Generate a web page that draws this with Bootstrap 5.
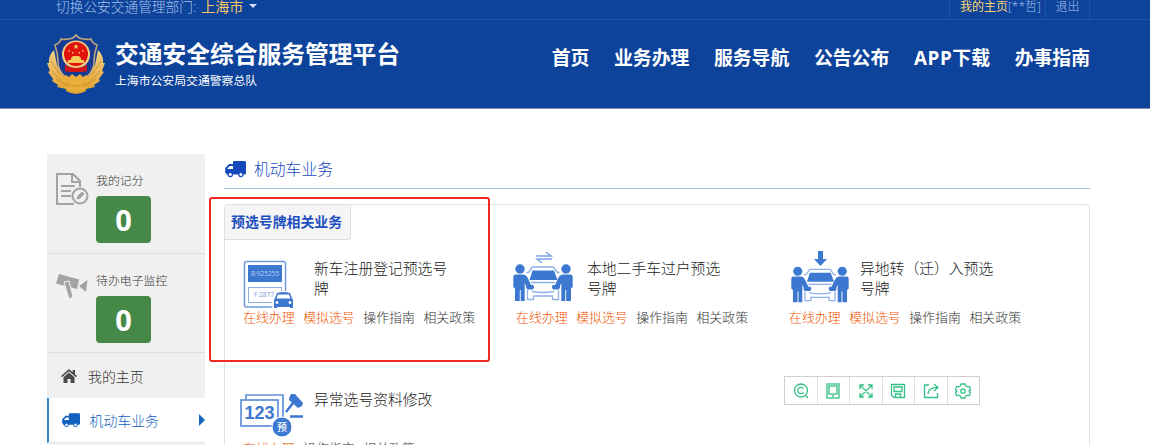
<!DOCTYPE html>
<html lang="zh-CN">
<head>
<meta charset="utf-8">
<meta name="viewport" content="width=device-width, initial-scale=1">
<title>交通安全综合服务管理平台</title>
<link href="https://cdn.jsdelivr.net/npm/bootstrap@5.3.0/dist/css/bootstrap.min.css" rel="stylesheet">
<style>
  body { font-family: "Open Sans", "Noto Sans CJK SC", sans-serif; font-weight: 300; height: 445px; overflow: hidden; position: relative; background: #fff; color: #333; }
  .page-wrap { width: 1043px; margin-left: 47px; }
  .site-head { background: #0d439b; height: 108.5px; border-bottom: 1px solid #8091b0; }
  .top-strip { height: 20px; border-bottom: 1px solid #1c52a8; }
  .top-strip .page-wrap { height: 19px; color: #a9c1ea; }
  .dept { font-size: 13.7px; line-height: 20px; margin-top: -6px; padding-left: 9px; white-space: nowrap; }
  .dept b { font-size: 14px; color: #ffc861; margin-left: 5px; }
  .tri-down { border: 4px solid transparent; border-top-color: #d5e2f7; border-bottom: 0; margin: -2px 0 0 6px; }
  .user-links { font-size: 12px; line-height: 14px; }
  .user-links span { border-left: 1px solid #1c52a8; height: 19px; white-space: nowrap; flex-shrink: 0; }
  .user-links b { color: #ffd36b; }
  .brand-title { font-size: 23.75px; line-height: 28px; font-weight: 700; }
  .brand-sub { font-size: 11.85px; line-height: 16px; font-weight: 400; }
  .main-nav { gap: 24.6px; font-size: 18.85px; line-height: 26px; font-weight: 700; margin-top: 25px; }
  .side { width: 158px; background: #f0f0f0; height: 300px; }
  .stat { height: 99.5px; border-bottom: 1px solid #dedede; padding: 18px 0 0 9px; }
  .stat svg { margin-top: 1px; }
  .stat-label { font-size: 11.9px; line-height: 18px; color: #333; margin-top: -1px; }
  .count { width: 55px; height: 47px; border-radius: 4px; background: #468847; color: #fff; font-size: 29px; line-height: 48px; font-weight: 700; margin-top: 7px; }
  .side-item { height: 45px; font-size: 13.9px; padding-left: 14px; }
  .side-item.current { background: #fff; color: #1060c0; border-left: 2px solid #3c86c4; padding-left: 13px; border-bottom: 1px solid #e3e3e3; }
  .tri-right { border: 6px solid transparent; border-left: 6px solid #1768c0; border-right: 0; }
  .content { width: 866px; margin-left: 19px; }
  .section-title { height: 35px; border-bottom: 1px solid #a9c5e6; color: #1448bc; font-size: 15.8px; line-height: 30px; }
  .panel { margin-top: 15px; height: 300px; border: 1px solid #e0e0e0; border-radius: 4px; }
  .panel-tab { width: 126px; height: 35px; background: #f5f5f5; border: 1px solid #ddd; border-width: 0 1px 1px 0; border-radius: 3px 0 4px 0; color: #1b4fc0; font-size: 13.9px; font-weight: 700; line-height: 34px; padding-left: 6px; white-space: nowrap; }
  .services { padding: 9px 0 0 12px; display: grid; grid-template-columns: repeat(3, 273px); grid-auto-rows: 131px; }
  .svc-title { width: 146px; font-size: 14.8px; line-height: 20px; height: 46px; margin: 9px 0 0 11px; color: #222; }
  .svc-links { font-size: 12.9px; line-height: 20px; gap: 8.6px; padding-left: 6px; margin-top: -2px; color: #333; white-space: nowrap; }
  .svc-links .hot { color: #f05400; }
  .mark-frame { position: absolute; left: 209px; top: 197px; width: 281px; height: 165px; border: 2px solid #ee2a22; border-radius: 3px; }
  .shot-tools { position: absolute; left: 784px; top: 376px; width: 196px; height: 29px; border: 1px solid #cfcfcf; background: #fff; color: #35c187; }
  .shot-tools span + span { border-left: 1px solid #dedede; }
</style>
</head>
<body>
<svg class="d-none">
  <symbol id="truck" viewBox="0 0 21 17"><path fill="currentColor" fill-rule="evenodd" d="M9 0h10.500q1.500 0 1.500 1.500V12q0 1.500-1.500 1.500H18.500a2.700 2.700 0 0 1-5.400 0H8a2.700 2.700 0 0 1-5.400 0H1.200V12H.2V7L4.100 3H8V1Q8 0 9 0ZM4.700 5 2.500 7.300V8H8V5ZM5.300 12a1.500 1.500 0 1 0 .01 0ZM15.800 12a1.500 1.500 0 1 0 .01 0Z"/></symbol>
  <symbol id="person" viewBox="0 0 22 38"><circle cx="7" cy="5" r="4.700"/><path d="M2 10.500h8.500q3 .5 4.500 4l3 6.500h2q1.500 1 1 2.500l-1 2h-5.500q-2-1-1.500-3.500L11.700 19v18H7.700V26h-.9v11H2V24.500L.3 23V13Q.3 11 2 10.500Z"/></symbol>
  <symbol id="people-car" viewBox="0 0 60 38">
    <path d="M19.500 6.500h21.500l3.500 9.500H16.500Z" fill="#3d78d0"/>
    <path d="M13.500 8.500h2l4-5.500h21l4 5.500h2M14.500 26v9.500h6V32h19v3.500h6V26M19 27.500q11 2 22 0M18 18.500h24" fill="none" stroke="#8db0e6" stroke-width="1.300"/>
    <use href="#person" width="22" height="38" fill="#3d78d0"/>
    <use href="#person" width="22" height="38" fill="#3d78d0" transform="matrix(-1 0 0 1 60 0)"/>
  </symbol>
</svg>

<header class="site-head text-white">
  <div class="top-strip">
    <div class="page-wrap d-flex justify-content-between">
      <div class="dept d-flex align-items-center"><span>切换公安交通管理部门:</span><b>上海市</b><i class="tri-down"></i></div>
      <div class="user-links d-flex"><span style="width:96px;padding-left:10px"><b>我的主页</b>[**哲]</span><span class="text-center" style="width:44px">退出</span><span></span></div>
    </div>
  </div>
  <div class="page-wrap d-flex justify-content-between">
    <div class="d-flex">
      <svg width="58" height="61" viewBox="0 0 58 61" style="margin-top:14px">
        <defs><linearGradient id="gold" x2="0" y2="1"><stop stop-color="#f3cf85"/><stop offset="1" stop-color="#dfa02c"/></linearGradient></defs>
        <path d="M7 16Q1 22 2 29l-2 0 3 8-2 1 5 7-1 2 6 4-1 2 9 2v2q10 6 20 0v-2l9-2-1-2 6-4-1-2 5-7-2-1 3-8h-2q1-7-5-13l-3 15-12 15H19L10 31Z" fill="url(#gold)"/>
        <path d="M29 1q3 4 8 4 5 1 7 0 1 4 6 6-3 9-3 17 0 13-18 22Q11 41 11 28q0-8-3-17 5-2 6-6 2 1 7 0 5 0 8-4Z" fill="#173b93" stroke="#c5a77c" stroke-width="1.500"/>
        <circle cx="29" cy="20.500" r="14" fill="#f0cf86"/><circle cx="29" cy="20" r="12" fill="#e0120e"/>
        <path d="M18 31q11 6 22 0v6l-5 1H23l-5-1Z" fill="#cf1715"/>
        <path d="m29 10 .8 1.800h1.900l-1.500 1.300.5 1.900-1.700-1.100-1.700 1.100.5-1.900-1.500-1.300h1.900ZM21.500 16h1.500v1.500h-1.500ZM35 16h1.500v1.500h-1.500ZM25 18h1.500v1.500H25ZM31.500 18H33v1.500h-1.500ZM24 24l2-2h6l2 2v2h3v3H21v-3h3Z" fill="#f5c85a"/>
        <path d="M13 45l6-4 3 2 3-3 4 3 4-3 3 3 3-2 6 4-5 9q-11 8-22 0Z" fill="#e9ae3a"/>
        <path d="M4 27l9 14M5 37l11 11M9 45l13 8M54 27l-9 14M53 37 42 48M49 45l-13 8M18 49q11 6 22 0" fill="none" stroke="#c78a2b" stroke-width=".8"/>
      </svg>
      <div style="padding:20px 0 0 10px">
        <div class="brand-title">交通安全综合服务管理平台</div>
        <div class="brand-sub mt-1">上海市公安局交通警察总队</div>
      </div>
    </div>
    <nav class="main-nav d-flex text-nowrap"><span>首页</span><span>业务办理</span><span>服务导航</span><span>公告公布</span><span><span style="letter-spacing:.6px">APP</span>下载</span><span>办事指南</span></nav>
  </div>
</header>

<main class="page-wrap d-flex overflow-hidden" style="padding-top:45.500px;height:336.500px">
  <aside class="side flex-shrink-0">
    <div class="stat d-flex">
      <svg width="33" height="33" viewBox="0 0 33 33" fill="none" stroke="#a3a3a3" stroke-width="2"><path d="M24 14V8l-7-7H1v30h17M16 1v8h8M5 13h14M5 18h10M5 23h10"/><circle cx="24" cy="23" r="7.500"/><path d="m21 26 1-3 4-4 2 2-4 4Z" fill="#a3a3a3" stroke-width="1"/></svg>
      <div style="margin-left:7px"><div class="stat-label">我的记分</div><div class="count text-center">0</div></div>
    </div>
    <div class="stat d-flex">
      <svg width="33" height="27" viewBox="0 0 33 27" fill="#a3a3a3"><path d="M3 1 23 6.500 21 16 0 10.500Z"/><path d="m23 13 8.500-6-1.500 12Z"/><path d="m8 9 5-1 4 16-4 2Z" stroke="#f0f0f0"/></svg>
      <div style="margin-left:7px"><div class="stat-label">待办电子监控</div><div class="count text-center">0</div></div>
    </div>
    <div class="side-item d-flex align-items-center">
      <svg width="16" height="14" viewBox="0 0 16 14" fill="#4b4b4b"><path d="M8 0 0 7l1 1.200 7-6 7 6L16 7l-2-1.800V1h-2.300v2.200ZM8 3.500 2.500 8.200V14h4v-4h3v4h4V8.200Z"/></svg>
      <span style="margin:3px 0 0 11px">我的主页</span>
    </div>
    <div class="side-item current d-flex align-items-center">
      <svg width="18" height="15"><use href="#truck"/></svg>
      <span style="margin:3px 0 0 9.500px">机动车业务</span><i class="tri-right ms-auto"></i>
    </div>
  </aside>

  <section class="content flex-shrink-0">
    <div class="section-title d-flex"><svg width="21" height="17" style="margin:7px 8px 0 1px"><use href="#truck"/></svg>机动车业务</div>
    <div class="panel">
      <div class="panel-tab">预选号牌相关业务</div>
      <div class="services">
        <div>
          <div class="d-flex">
            <svg width="66" height="60" viewBox="0 0 66 60"><rect x="7.500" y="12.500" width="41" height="45.500" rx="2" fill="#fff" stroke="#6f9bde" stroke-width="1.500"/><rect x="11" y="16" width="34" height="17" fill="#3d78d0"/><text x="28" y="27" font-size="6.500" font-weight="400" text-anchor="middle" fill="#b6cff3">B·925255</text><rect x="11.500" y="38.500" width="33" height="15" fill="#fff" stroke="#8db0e6"/><text x="27" y="48" font-size="6.500" font-weight="400" text-anchor="middle" fill="#6f9bde">F·2877</text><path d="M35 60V50l3-8h17l3 8v10Z" fill="#fff"/><path d="m40 44-2 5-1 2v8h3v-1h13v1h3v-8l-1-2-2-5q-7-2-13 0Zm1 1.500h11l1.500 4h-14ZM40 52a1.500 1.500 0 1 1-.01 0ZM53 52a1.500 1.500 0 1 1-.01 0Z" fill="#3d78d0" fill-rule="evenodd"/></svg>
            <div class="svc-title">新车注册登记预选号牌</div>
          </div>
          <div class="svc-links d-flex"><span class="hot">在线办理</span><span class="hot">模拟选号</span><span>操作指南</span><span>相关政策</span></div>
        </div>
        <div>
          <div class="d-flex">
            <svg width="66" height="60" viewBox="0 0 66 60"><use href="#people-car" x="3" y="15" width="60" height="38"/><path d="M26 7h15l-5-4M42 10H27l5 4" fill="none" stroke="#7ba3e2" stroke-width="1.500"/></svg>
            <div class="svc-title">本地二手车过户预选号牌</div>
          </div>
          <div class="svc-links d-flex"><span class="hot">在线办理</span><span class="hot">模拟选号</span><span>操作指南</span><span>相关政策</span></div>
        </div>
        <div>
          <div class="d-flex">
            <svg width="66" height="60" viewBox="0 0 66 60"><use href="#people-car" x="8" y="17" width="58" height="37.500"/><path d="M35 2h5v8h4l-6.500 7-6.500-7h4Z" fill="#3d78d0"/></svg>
            <div class="svc-title">异地转（迁）入预选号牌</div>
          </div>
          <div class="svc-links d-flex"><span class="hot">在线办理</span><span class="hot">模拟选号</span><span>操作指南</span><span>相关政策</span></div>
        </div>
        <div>
          <div class="d-flex">
            <svg width="66" height="60" viewBox="0 0 66 60"><path d="M9 19v-4h37v27" fill="none" stroke="#5f90da" stroke-width="1.700"/><rect x="4" y="20" width="37" height="26" fill="#fff" stroke="#5f90da" stroke-width="1.700"/><text x="22.500" y="39" font-family="Liberation Sans" font-size="18" font-weight="700" text-anchor="middle" fill="#3d78d0">123</text><circle cx="45" cy="47" r="10" fill="#3d78d0" stroke="#fff"/><text x="45" y="51" font-size="10" font-weight="500" text-anchor="middle" fill="#fff">预</text><path d="m54 14 4 0 8 9-1 3-4 2-9-8 .5-3Z" fill="#3d78d0"/><path d="m56 23-7 9M53 36.500h13" stroke="#3d78d0" stroke-width="2.500"/></svg>
            <div class="svc-title">异常选号资料修改</div>
          </div>
          <div class="svc-links d-flex"><span class="hot">在线办理</span><span>操作指南</span><span>相关政策</span></div>
        </div>
      </div>
    </div>
  </section>
</main>

<div class="mark-frame"></div>
<div class="shot-tools d-flex">
  <span class="flex-fill d-flex align-items-center justify-content-center"><svg width="16" height="16" fill="none" stroke="currentColor" stroke-width="1.300"><circle cx="8" cy="7.500" r="6.500"/><path d="M10.500 5.500a3.200 3.200 0 1 0 0 4M12 12l3 3"/></svg></span>
  <span class="flex-fill d-flex align-items-center justify-content-center"><svg width="16" height="16" fill="none" stroke="currentColor" stroke-width="1.300"><rect x="2" y="1" width="12" height="14"/><rect x="4" y="3" width="8" height="8"/><path d="M7 13h2"/></svg></span>
  <span class="flex-fill d-flex align-items-center justify-content-center"><svg width="16" height="16" fill="none" stroke="currentColor" stroke-width="1.300"><path d="m2 2 12 12M14 2 2 14M2 6V2h4M10 2h4v4M2 10v4h4M10 14h4v-4"/></svg></span>
  <span class="flex-fill d-flex align-items-center justify-content-center"><svg width="16" height="16" fill="none" stroke="currentColor" stroke-width="1.300"><path d="M1.500 1.500h13v13H4L1.500 12ZM4 4h8v4.500H4ZM5.500 14.500V11h5v3.500"/></svg></span>
  <span class="flex-fill d-flex align-items-center justify-content-center"><svg width="16" height="16" fill="none" stroke="currentColor" stroke-width="1.300"><path d="M6 2H1.500v12.500h13V10M11 1l4 3.500L11 8M15 4.500Q6 4 5 11"/></svg></span>
  <span class="flex-fill d-flex align-items-center justify-content-center"><svg width="16" height="16" fill="none" stroke="currentColor" stroke-width="1.300" stroke-linejoin="round"><path d="m6 1h4l.7 2 1.500.8 2-.5 1.500 3L14 8l1.700 1.700-1.500 3-2-.5-1.500.8L10 15H6l-.7-2-1.500-.8-2 .5-1.500-3L2 8 .3 6.300l1.500-3 2 .5L5.300 3Z"/><circle cx="8" cy="8" r="2.200"/></svg></span>
</div>
<script src="https://cdn.jsdelivr.net/npm/bootstrap@5.3.0/dist/js/bootstrap.bundle.min.js"></script>
</body>
</html>
